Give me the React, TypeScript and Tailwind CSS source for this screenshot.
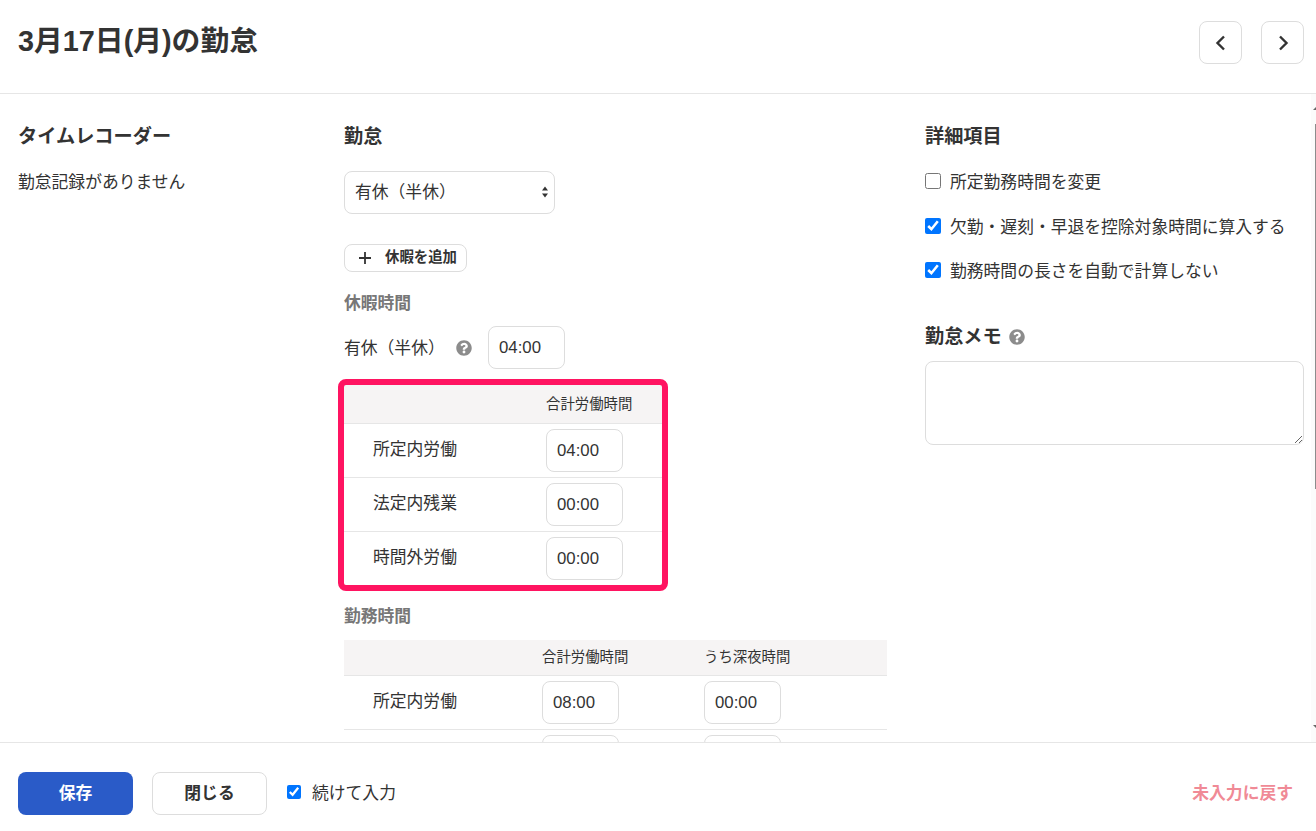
import { FaQuestionCircle } from "react-icons/fa";

const inputCls =
  "w-[77px] h-[43px] border border-[#dddddd] rounded-[8px] px-[10px] text-[16.8px] text-[#333] bg-white outline-none";

const TimeInput = ({ value }: { value: string }) => (
  <input type="text" defaultValue={value} className={inputCls} />
);

const Check = ({ label, checked }: { label: string; checked?: boolean }) => (
  <label className="flex items-center h-[24px] text-[16.8px] text-[#333]">
    <input type="checkbox" defaultChecked={checked} className="w-[16px] h-[16px] m-0 mr-[9px] -mt-[4px]" />
    {label}
  </label>
);

const NavButton = ({ d }: { d: string }) => (
  <button className="w-[43px] h-[43px] border border-[#dddddd] rounded-[8px] bg-white flex items-center justify-center">
    <svg width="16" height="16" viewBox="0 0 16 16" fill="none" stroke="#333" strokeWidth="2.4">
      <path d={d} />
    </svg>
  </button>
);

const SmallTitle = ({ children }: { children: React.ReactNode }) => (
  <h4 className="text-[16.8px] leading-[24px] font-bold text-[#777]">{children}</h4>
);

const Row = ({ label, values, labelW, last }: { label: string; values: string[]; labelW: string; last?: boolean }) => (
  <div className={last ? "flex items-center h-[53px]" : "flex items-center h-[54px] border-b border-[#e6e6e6]"}>
    <div className={`${labelW} pl-[29px] shrink-0 text-[16.8px] -mt-[2px]`}>{label}</div>
    <div className="w-[162px]">
      <TimeInput value={values[0]} />
    </div>
    {values[1] && <TimeInput value={values[1]} />}
  </div>
);

export default function App() {
  return (
    <div
      className="w-[1316px] h-[831px] flex flex-col bg-white text-[#333] overflow-hidden"
      style={{ fontFamily: '"Liberation Sans", "Noto Sans CJK JP", sans-serif' }}
    >
      <header className="h-[94px] shrink-0 border-b border-[#e6e6e6] flex items-start justify-between pl-[18px] pr-[12px]">
        <h1 className="text-[28.8px] leading-[40px] font-bold mt-[21px]">3月17日(月)の勤怠</h1>
        <div className="flex gap-[19px] mt-[21px]">
          <NavButton d="M11 1.5 4.5 8l6.5 6.5" />
          <NavButton d="M5 1.5 11.5 8 5 14.5" />
        </div>
      </header>

      <main className="relative flex-1 min-h-0 overflow-hidden flex pl-[18px] pt-[31px]">
        <section className="w-[326px] shrink-0">
          <h3 className="text-[19.2px] leading-[24px] font-bold">タイムレコーダー</h3>
          <p className="mt-[22px] text-[16.8px] leading-[24px]">勤怠記録がありません</p>
        </section>

        <section className="w-[543px] shrink-0">
          <h3 className="text-[19.2px] leading-[24px] font-bold">勤怠</h3>
          <div className="relative mt-[22px] w-[211px]">
            <select className="block appearance-none w-full h-[43px] border border-[#dddddd] rounded-[8px] pl-[10px] pr-[24px] text-[16.8px] text-[#333] bg-white outline-none">
              <option>有休（半休）</option>
            </select>
            <svg width="8" height="14" viewBox="0 0 8 14" fill="#333" className="absolute right-[6px] top-[14px] pointer-events-none">
              <path d="M4 1.5 7 5.5H1zM4 12.5 1 8.5h6z" />
            </svg>
          </div>
          <button className="mt-[30px] flex items-center w-[123px] h-[28px] border border-[#dddddd] rounded-[8px] bg-white pl-[12px] text-[14.4px] font-bold">
            <svg width="16" height="16" viewBox="0 0 16 16" stroke="#333" strokeWidth="1.8" className="mr-[12px]">
              <path d="M8 2v12M2 8h12" />
            </svg>
            休暇を追加
          </button>

          <div className="mt-[20px]">
            <SmallTitle>休暇時間</SmallTitle>
          </div>
          <div className="mt-[10px] flex items-center">
            <span className="text-[16.8px] w-[112px] pt-[2px]">有休（半休）</span>
            <FaQuestionCircle className="w-[16px] h-[16px] text-[#8c8c8c]" />
            <span className="ml-[16px]">
              <TimeInput value="04:00" />
            </span>
          </div>

          <div className="relative mt-[16px] w-[318px]">
            <div className="h-[39px] bg-[#f6f4f4] border-b border-[#e6e6e6] flex items-center pl-[202px] pt-[2px] text-[14.4px]">
              合計労働時間
            </div>
            <Row label="所定内労働" values={["04:00"]} labelW="w-[202px]" />
            <Row label="法定内残業" values={["00:00"]} labelW="w-[202px]" />
            <Row label="時間外労働" values={["00:00"]} labelW="w-[202px]" last />
            <div className="absolute -inset-[6px] border-[6px] border-[#ff1461] rounded-[8px] pointer-events-none" />
          </div>

          <div className="mt-[20px]">
            <SmallTitle>勤務時間</SmallTitle>
          </div>
          <div className="mt-[11px]">
            <div className="h-[36px] bg-[#f6f4f4] border-b border-[#e6e6e6] flex items-center pl-[198px] text-[14.4px]">
              <span className="w-[162px]">合計労働時間</span>
              <span>うち深夜時間</span>
            </div>
            <Row label="所定内労働" values={["08:00", "00:00"]} labelW="w-[198px]" />
            <Row label="" values={["00:00", "00:00"]} labelW="w-[198px]" />
          </div>
        </section>

        <section className="ml-[38px] w-[379px] shrink-0">
          <h3 className="text-[19.2px] leading-[24px] font-bold">詳細項目</h3>
          <div className="mt-[22px] flex flex-col gap-[20.5px]">
            <Check label="所定勤務時間を変更" />
            <Check label="欠勤・遅刻・早退を控除対象時間に算入する" checked />
            <Check label="勤務時間の長さを自動で計算しない" checked />
          </div>
          <h3 className="mt-[41px] text-[19.2px] leading-[24px] font-bold flex items-center">
            勤怠メモ
            <FaQuestionCircle className="ml-[7px] w-[16px] h-[16px] text-[#8c8c8c]" />
          </h3>
          <textarea className="block mt-[12px] w-[379px] h-[84px] border border-[#dddddd] rounded-[8px] bg-white outline-none" />
        </section>

        <div className="absolute right-0 top-0 bottom-0 w-[5px] bg-[#fbfbfb]">
          <svg width="3" height="3" viewBox="0 0 3 3" fill="#666" className="absolute right-0 top-[13px]">
            <path d="M3 0v3H0z" />
          </svg>
          <div className="absolute right-0 top-[30px] w-[1px] h-[365px] bg-[#8c8c8c]" />
          <svg width="3" height="3" viewBox="0 0 3 3" fill="#666" className="absolute right-0 bottom-[14px]">
            <path d="M0 0h3v3z" />
          </svg>
        </div>
      </main>

      <footer className="h-[89px] shrink-0 border-t border-[#e6e6e6] flex items-start pl-[18px] pr-[23px] pt-[29px]">
        <button className="w-[115px] h-[43px] rounded-[8px] bg-[#2a5bc8] text-white text-[16.8px] font-bold">保存</button>
        <button className="ml-[19px] w-[115px] h-[43px] rounded-[8px] border border-[#dddddd] bg-white text-[16.8px] font-bold">
          閉じる
        </button>
        <label className="ml-[20px] h-[43px] flex items-center text-[16.8px]">
          <input type="checkbox" defaultChecked className="w-[14px] h-[14px] m-0 mr-[11px] -mt-[4px]" />
          続けて入力
        </label>
        <button className="ml-auto h-[43px] text-[16.8px] font-bold text-[#f08a96]">未入力に戻す</button>
      </footer>
    </div>
  );
}
